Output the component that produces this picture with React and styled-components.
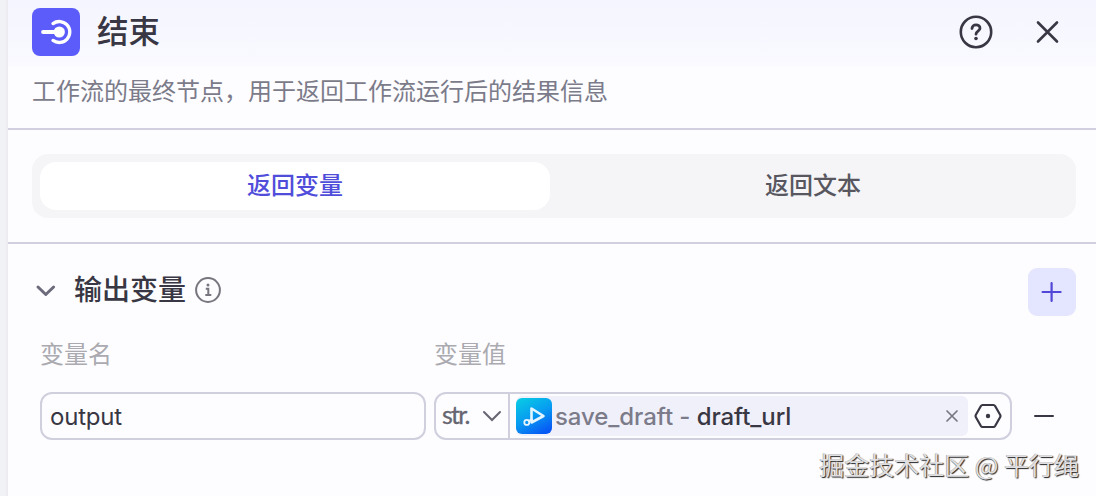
import React from "react";
import styled, { createGlobalStyle } from "styled-components";

const GlobalStyle = createGlobalStyle`
  * {
    box-sizing: border-box;
  }

  body {
    margin: 0;
    overflow: hidden;
    background: #f1f1f6;
    font-family: Inter, "Noto Sans CJK SC", sans-serif;
    color: #383743;
  }
`;

const Page = styled.div`
  display: flex;
  height: 496px;
  padding-left: 8px;
  position: relative;
  background: linear-gradient(to right, #f1f2f6 5px, #e9e9ee 8px);
`;

const Panel = styled.main`
  flex: 1;
  min-width: 0;
  background: #fdfdff;
`;

const Header = styled.header`
  height: 130px;
  padding: 8px 20px 0 24px;
  border-bottom: 2px solid #d1cfe0;
  background: linear-gradient(to bottom, #f5f5ff 0, #f9f9ff 62px, #fdfdff 68px);
`;

const TitleRow = styled.div`
  display: flex;
  align-items: center;
  height: 48px;
`;

const NodeIcon = styled.div`
  width: 48px;
  height: 48px;
  border-radius: 8px;
  background: #5b5cfa;
  margin-right: 17px;

  svg {
    display: block;
  }
`;

const Title = styled.h1`
  flex: 1;
  margin: 0;
  font-size: 31.5px;
  line-height: 48px;
  font-weight: 500;
`;

const HeaderButton = styled.button`
  display: flex;
  align-items: center;
  justify-content: center;
  width: 56px;
  height: 48px;
  margin-left: ${({ $gap }) => $gap || 0}px;
  padding: 0;
  border: 0;
  background: none;
  color: #383743;
`;

const Description = styled.p`
  margin: 18px 0 0;
  font-size: 24px;
  line-height: 36px;
  color: #7b7b8a;
`;

const TabsSection = styled.section`
  height: 114px;
  padding: 24px 20px 24px 24px;
  border-bottom: 2px solid #d1cfe0;
`;

const Tabs = styled.div`
  display: flex;
  gap: 8px;
  height: 64px;
  padding: 8px;
  border-radius: 16px;
  background: #f5f5f8;
`;

const Tab = styled.button`
  flex: 1;
  padding: 0;
  border: 0;
  border-radius: 16px;
  background: ${({ $active }) => ($active ? "#fff" : "none")};
  color: ${({ $active }) => ($active ? "#514ddb" : "#58575f")};
  font-family: inherit;
  font-size: 24px;
  font-weight: 500;
  line-height: 48px;
`;

const Output = styled.section`
  padding: 24px 20px 0 24px;
`;

const OutputHeader = styled.div`
  display: flex;
  height: 48px;
`;

const OutputHeading = styled.div`
  display: flex;
  align-items: center;
  height: 44px;
`;

const OutputTitle = styled.h2`
  margin: 0 8px 0 14px;
  font-size: 28px;
  line-height: 44px;
  font-weight: 500;
`;

const AddButton = styled.button`
  display: flex;
  align-items: center;
  justify-content: center;
  width: 48px;
  height: 48px;
  margin-left: auto;
  padding: 0;
  border: 0;
  border-radius: 9px;
  background: #e4e5fe;
  color: #5147d8;
`;

const Grid = styled.div`
  display: grid;
  grid-template-columns: 386px 578px 1fr;
  column-gap: 8px;
  margin-left: 8px;
`;

const Label = styled.div`
  height: 76px;
  padding-top: 21px;
  font-size: 24px;
  line-height: 36px;
  color: #aaaab0;
`;

const Field = styled.div`
  display: flex;
  align-items: center;
  height: 48px;
  border: 2px solid #cfcfde;
  border-radius: 12px;
  overflow: hidden;
`;

const NameInput = styled.input`
  width: 100%;
  padding: 0 8px;
  border: 0;
  outline: 0;
  background: none;
  color: #383743;
  font-family: inherit;
  font-size: 24px;
  letter-spacing: -0.2px;
`;

const TypeSelect = styled.div`
  display: flex;
  align-items: center;
  justify-content: space-between;
  width: 74px;
  height: 100%;
  padding: 0 6px;
  border-right: 2px solid #cfcfde;
  font-family: Lato, sans-serif;
  font-size: 25px;
  line-height: 40px;
  letter-spacing: -1.8px;
  color: #666571;
  -webkit-text-stroke: 0.3px #666571;
`;

const TypeName = styled.span`
  padding-bottom: 4px;
`;

const Reference = styled.div`
  display: flex;
  align-items: center;
  width: 452px;
  height: 40px;
  margin-left: 6px;
  padding-right: 8px;
  border-radius: 6px;
  background: #f0f0fa;
  font-size: 24px;
  font-weight: 500;
  letter-spacing: -0.08px;
  white-space: pre;

  > svg {
    flex-shrink: 0;
  }
`;

const Source = styled.span`
  margin-left: 3px;
  color: #7b7b8a;
`;

const Variable = styled.span`
  flex: 1;
  color: #383743;
`;

const PickerButton = styled.div`
  display: flex;
  flex: 1;
  align-items: center;
  justify-content: center;
  padding-right: 2px;
`;

const RemoveCell = styled.div`
  display: flex;
  align-items: center;
  padding-left: 14px;
`;

const Watermark = styled.div`
  position: absolute;
  right: 17px;
  bottom: 14px;
  color: #e0e0e2;
  font-family: "Noto Sans CJK SC", sans-serif;
  font-size: 25px;
  line-height: 36px;
  text-shadow: 1px 1px 1px #222, -0.5px -0.5px 0 #999;
  white-space: nowrap;
`;

const EndIcon = () => (
  <svg width="48" height="48" fill="none" stroke="#fff" strokeLinecap="round">
    <path d="M11 24h14" strokeWidth="3.8" />
    <circle cx="27.3" cy="24" r="5.6" fill="#fff" stroke="none" />
    <path d="M21 15.600A10.500 10.500 0 1 1 21 32.400" strokeWidth="3.300" />
  </svg>
);

const HelpIcon = () => (
  <svg width="36" height="36" fill="none" stroke="currentColor" strokeLinecap="round">
    <circle cx="18" cy="18" r="15.2" strokeWidth="2.6" />
    <path
      d="M14 14.5C14 9.7 22 9.7 22 14.3C22 17.1 18 17.3 18 20.2"
      strokeWidth="2.8"
      strokeLinejoin="round"
    />
    <circle cx="18" cy="24.5" r="1.8" fill="currentColor" stroke="none" />
  </svg>
);

const CloseIcon = () => (
  <svg width="24" height="24" fill="none">
    <path
      d="M2 2.5l19 19M21 2.5l-19 19"
      stroke="currentColor"
      strokeWidth="2.6"
      strokeLinecap="round"
    />
  </svg>
);

const InfoIcon = () => (
  <svg width="28" height="28" fill="none" stroke="#77767f" strokeWidth="2">
    <circle cx="14" cy="14" r="11.9" />
    <path d="M11.8 12.7h2.5v6M11.3 19h6" />
    <circle cx="14" cy="9" r="1.5" fill="#77767f" stroke="none" />
  </svg>
);

const PluginIcon = () => (
  <svg width="36" height="36" fill="none">
    <defs>
      <linearGradient id="plugin" x1="0.2" y1="0" x2="0.75" y2="1">
        <stop stopColor="#08c8e5" />
        <stop offset="0.5" stopColor="#079bf1" />
        <stop offset="1" stopColor="#0757f5" />
      </linearGradient>
    </defs>
    <rect width="36" height="36" rx="6" fill="url(#plugin)" />
    <g stroke="#e4f5ff" strokeLinejoin="round" strokeLinecap="round">
      <path d="M15.5 10.5L27.5 18L15.5 24.500z" strokeWidth="2.6" />
      <path d="M12.8 23L16 21.500" strokeWidth="2" />
      <circle cx="10.8" cy="24.4" r="2.5" strokeWidth="1.8" />
    </g>
  </svg>
);

const App = () => (
  <>
    <GlobalStyle />
    <Page>
      <Panel>
        <Header>
          <TitleRow>
            <NodeIcon>
              <EndIcon />
            </NodeIcon>
            <Title>结束</Title>
            <HeaderButton aria-label="帮助">
              <HelpIcon />
            </HeaderButton>
            <HeaderButton aria-label="关闭" $gap={16}>
              <CloseIcon />
            </HeaderButton>
          </TitleRow>
          <Description>工作流的最终节点，用于返回工作流运行后的结果信息</Description>
        </Header>
        <TabsSection>
          <Tabs>
            <Tab $active>返回变量</Tab>
            <Tab>返回文本</Tab>
          </Tabs>
        </TabsSection>
        <Output>
          <OutputHeader>
            <OutputHeading>
              <svg width="28" height="24" fill="none">
                <path
                  d="M6 9l7.8 7.5 7.8-7.5"
                  stroke="#6b6b7c"
                  strokeWidth="3"
                  strokeLinecap="round"
                  strokeLinejoin="round"
                />
              </svg>
              <OutputTitle>输出变量</OutputTitle>
              <InfoIcon />
            </OutputHeading>
            <AddButton aria-label="添加">
              <svg width="24" height="24">
                <path
                  d="M11.6 3v18M2.6 12h18"
                  stroke="currentColor"
                  strokeWidth="2.2"
                  strokeLinecap="round"
                />
              </svg>
            </AddButton>
          </OutputHeader>
          <Grid>
            <Label>变量名</Label>
            <Label>变量值</Label>
            <span />
            <Field>
              <NameInput defaultValue="output" />
            </Field>
            <Field>
              <TypeSelect>
                <TypeName>str.</TypeName>
                <svg width="20" height="12" fill="none">
                  <path
                    d="M2 2l8 8 8-8"
                    stroke="currentColor"
                    strokeWidth="2"
                    strokeLinecap="round"
                  />
                </svg>
              </TypeSelect>
              <Reference>
                <PluginIcon />
                <Source>save_draft - </Source>
                <Variable>draft_url</Variable>
                <svg width="16" height="16">
                  <path
                    d="M3 3l10 10M13 3L3 13"
                    stroke="#777783"
                    strokeWidth="1.7"
                    strokeLinecap="round"
                  />
                </svg>
              </Reference>
              <PickerButton>
                <svg width="28" height="26" fill="none">
                  <path
                    d="M8.5 2h11q1 0 1.6 1l5 8.8q.7 1.2 0 2.4l-5 8.8q-.6 1-1.6 1h-11q-1 0-1.6-1l-5-8.8q-.7-1.2 0-2.4l5-8.8Q7.5 2 8.5 2z"
                    stroke="#383743"
                    strokeWidth="2.2"
                  />
                  <circle cx="14" cy="13" r="2.2" fill="#383743" />
                </svg>
              </PickerButton>
            </Field>
            <RemoveCell>
              <svg width="20" height="4">
                <path d="M1 2h18" stroke="#383743" strokeWidth="2" strokeLinecap="round" />
              </svg>
            </RemoveCell>
          </Grid>
        </Output>
      </Panel>
      <Watermark>掘金技术社区 @ 平行绳</Watermark>
    </Page>
  </>
);

export default App;
